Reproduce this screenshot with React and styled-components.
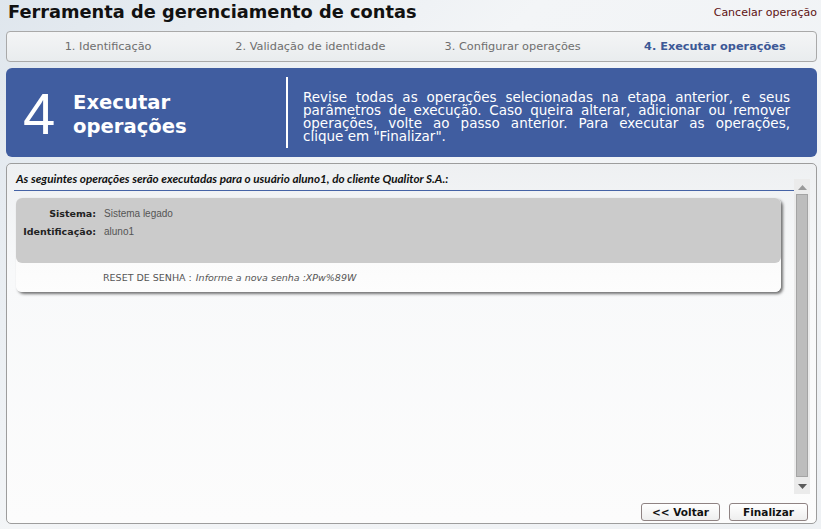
import React from 'react';
import styled, { createGlobalStyle } from 'styled-components';

const GlobalStyle = createGlobalStyle`
  html, body {
    margin: 0;
    height: 100%;
  }
  body {
    background: linear-gradient(135deg, #dfe6ed 0%, #f3f5f7 40%, #eef1f4 100%);
    font-family: 'DejaVu Sans', Verdana, sans-serif;
  }
`;

const Page = styled.div`
  width: 821px;
  height: 529px;
  box-sizing: border-box;
  padding: 0 4px 0 6px;
  display: flex;
  flex-direction: column;
`;

const TitleBar = styled.div`
  height: 31px;
  display: flex;
  align-items: flex-start;
  justify-content: space-between;
  padding-left: 2px;
`;

const Title = styled.h1`
  margin: 1px 0 0;
  font-size: 17.8px;
  font-weight: bold;
  color: #111;
`;

const CancelLink = styled.a`
  margin-top: 6px;
  font-size: 11px;
  color: #5e1212;
  cursor: pointer;
`;

const Steps = styled.div`
  height: 31px;
  box-sizing: border-box;
  border: 1px solid #a9a9a9;
  border-radius: 4px;
  background: linear-gradient(#f4f5f6, #e9ecee);
  display: grid;
  grid-template-columns: repeat(4, 1fr);
  align-items: center;
`;

const Step = styled.div`
  text-align: center;
  font-size: 11.3px;
  color: ${p => (p.$active ? '#3c5896' : '#6e6e6e')};
  font-weight: ${p => (p.$active ? 'bold' : 'normal')};
`;

const Banner = styled.div`
  margin-top: 6px;
  height: 89px;
  border-radius: 6px;
  background: #405da0;
  display: flex;
  align-items: center;
  padding-left: 17px;
  color: #fff;
`;

const StepNumber = styled.div`
  width: 32px;
  font-family: 'Liberation Sans', Arial, sans-serif;
  font-size: 58px;
  line-height: 1;
  margin-top: 2px;
`;

const StepName = styled.div`
  width: 212px;
  margin: 4px 0 0 18px;
  font-size: 19.6px;
  font-weight: bold;
  line-height: 24px;
`;

const Divider = styled.div`
  width: 2px;
  height: 71px;
  background: #fff;
  margin: 0 15px 0 1px;
`;

const Description = styled.p`
  margin: 9px 0 0;
  width: 487px;
  font-size: 13.5px;
  line-height: 13px;
  text-align: justify;
`;

const Panel = styled.div`
  margin-top: 6px;
  height: 361px;
  box-sizing: border-box;
  border: 1px solid #9d9d9d;
  border-radius: 5px;
  background: linear-gradient(#eef0f2 0%, #f8f9fa 30%, #fcfcfc 100%);
  display: flex;
  flex-direction: column;
  padding: 0 6px 0 7px;
`;

const ScrollArea = styled.div`
  margin-top: 9px;
  height: 321px;
  display: flex;
`;

const Content = styled.div`
  flex: 1;
`;

const Heading = styled.div`
  font-family: Lato, 'Open Sans', sans-serif;
  font-size: 11.7px;
  line-height: 11px;
  font-weight: bold;
  font-style: italic;
  color: #111;
  padding: 0 0 6px 2px;
  border-bottom: 1px solid #4563a6;
`;

const Card = styled.div`
  margin: 7px 13px 0 2px;
  border-radius: 6px;
  background: linear-gradient(#f7f7f7, #fdfdfd);
  box-shadow: 2px 2px 3px rgba(0, 0, 0, 0.55);
`;

const CardInfo = styled.div`
  height: 65px;
  box-sizing: border-box;
  background: #cbcbcb;
  border-radius: 6px;
  padding-top: 6px;
  display: grid;
  grid-template-columns: 80px 1fr;
  grid-auto-rows: 18px;
  column-gap: 8px;
  align-items: center;
`;

const Label = styled.span`
  text-align: right;
  font-family: 'DejaVu Sans', Tahoma, sans-serif;
  font-size: 9.5px;
  font-weight: bold;
  color: #222;
`;

const Value = styled.span`
  font-family: 'Liberation Sans', Tahoma, sans-serif;
  font-size: 10px;
  color: #555;
`;

const Operation = styled.div`
  height: 29px;
  display: flex;
  align-items: center;
  padding-left: 87px;
  font-family: 'DejaVu Sans', Tahoma, sans-serif;
  font-size: 9.5px;
  color: #555;
  em {
    margin-left: 4px;
  }
`;

const Scrollbar = styled.div`
  width: 16px;
  margin-top: 6px;
  background: #ebebeb;
  display: flex;
  flex-direction: column;
  align-items: center;
`;

const Arrow = styled.div`
  height: 8px;
  display: flex;
  align-items: center;
  justify-content: center;
  margin: ${p => (p.$down ? '5px 0 4px' : '4px 0 3px')};
`;

const Thumb = styled.div`
  flex: 1;
  width: 12px;
  box-sizing: border-box;
  background: #bdbdbd;
  border: 1px solid #a4a4a4;
`;

const Actions = styled.div`
  margin-top: 9px;
  display: flex;
  justify-content: flex-end;
  gap: 9px;
  padding-right: 2px;
`;

const Button = styled.button`
  width: 79px;
  height: 18px;
  padding: 0;
  border: 1px solid #8f8383;
  border-radius: 3px;
  background: linear-gradient(#ffffff, #eeeeee);
  font-family: 'DejaVu Sans', Verdana, sans-serif;
  font-size: 10.5px;
  font-weight: bold;
  color: #111;
  cursor: pointer;
`;

const steps = [
  '1. Identificação',
  '2. Validação de identidade',
  '3. Configurar operações',
  '4. Executar operações',
];

const ArrowIcon = ({ down }) => (
  <svg width="9" height="5" viewBox="0 0 9 5">
    <polygon points={down ? '0,0 9,0 4.5,5' : '0,5 9,5 4.5,0'} fill={down ? '#5a5a5a' : '#9a9a9a'} />
  </svg>
);

const App = () => {
  return (
    <>
      <GlobalStyle />
      <Page>
        <TitleBar>
          <Title>Ferramenta de gerenciamento de contas</Title>
          <CancelLink>Cancelar operação</CancelLink>
        </TitleBar>

        <Steps>
          {steps.map((s, i) => (
            <Step key={s} $active={i === 3}>{s}</Step>
          ))}
        </Steps>

        <Banner>
          <StepNumber>4</StepNumber>
          <StepName>Executar<br />operações</StepName>
          <Divider />
          <Description>
            Revise todas as operações selecionadas na etapa anterior, e seus
            parâmetros de execução. Caso queira alterar, adicionar ou remover
            operações, volte ao passo anterior. Para executar as operações,
            clique&nbsp;em&nbsp;"Finalizar".
          </Description>
        </Banner>

        <Panel>
          <ScrollArea>
            <Content>
              <Heading>
                As seguintes operações serão executadas para o usuário aluno1, do cliente Qualitor S.A.:
              </Heading>
              <Card>
                <CardInfo>
                  <Label>Sistema:</Label>
                  <Value>Sistema legado</Value>
                  <Label>Identificação:</Label>
                  <Value>aluno1</Value>
                </CardInfo>
                <Operation>
                  RESET DE SENHA : <em>Informe a nova senha :XPw%89W</em>
                </Operation>
              </Card>
            </Content>
            <Scrollbar>
              <Arrow><ArrowIcon /></Arrow>
              <Thumb />
              <Arrow $down><ArrowIcon down /></Arrow>
            </Scrollbar>
          </ScrollArea>
          <Actions>
            <Button>&lt;&lt; Voltar</Button>
            <Button>Finalizar</Button>
          </Actions>
        </Panel>
      </Page>
    </>
  );
};

export default App;
